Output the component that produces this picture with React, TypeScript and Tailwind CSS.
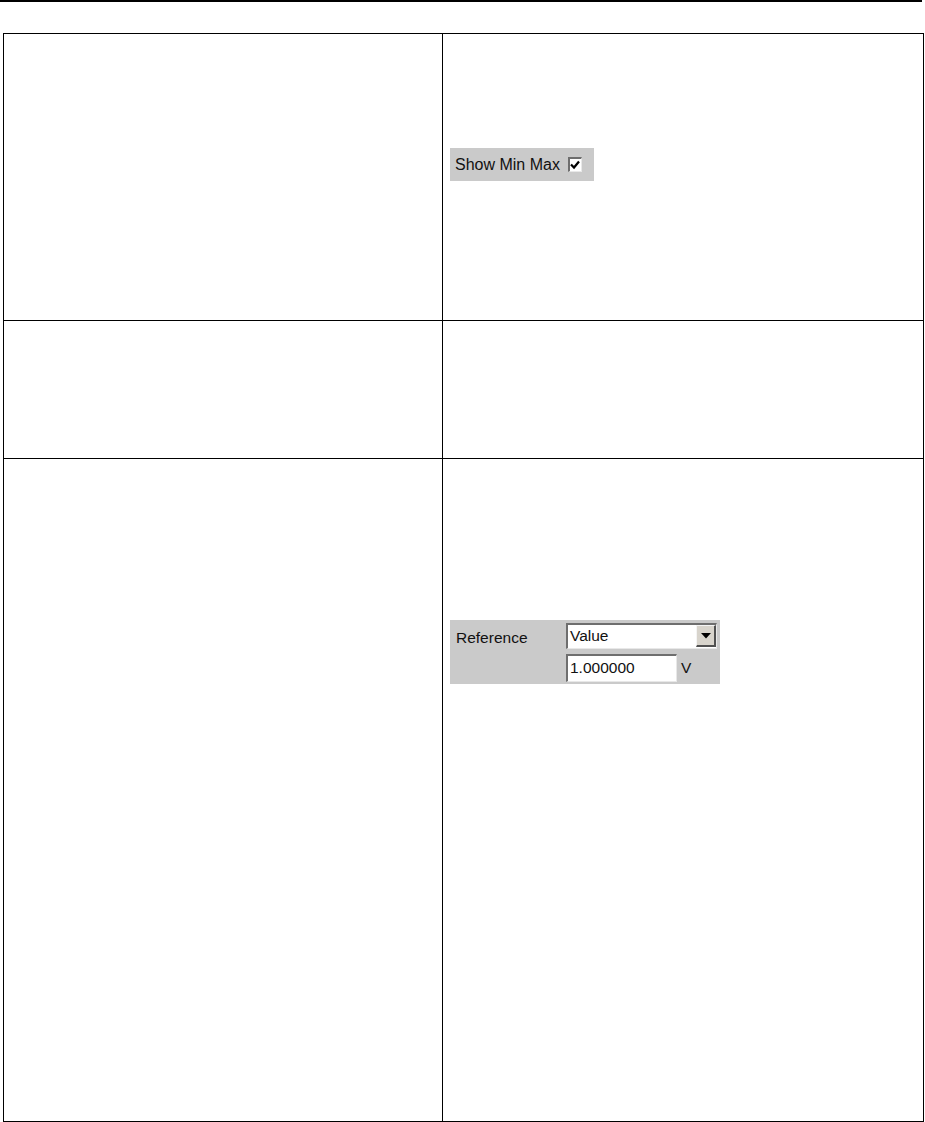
import React from 'react';

const font = "font-['Liberation_Sans',Arial,sans-serif]";

const ShowMinMax: React.FC = () => (
  <div className={`flex h-[33px] w-[144px] items-center bg-[#cacaca] pl-[5px] text-[16px] text-[#111] ${font}`}>
    <span>Show Min Max</span>
    <span className="ml-[8px] flex h-[15px] w-[14px] items-center justify-center border-t-2 border-l-2 border-r border-b border-t-[#6e6e6e] border-l-[#6e6e6e] border-r-[#e8e8e8] border-b-[#e8e8e8] bg-white">
      <svg width="10" height="10" viewBox="0 0 10 10">
        <path d="M1 4.5 L4 7.5 L9 1.5" fill="none" stroke="#000" strokeWidth="2.2" />
      </svg>
    </span>
  </div>
);

const ReferencePanel: React.FC = () => (
  <div className={`flex h-[64px] w-[270px] bg-[#cacaca] text-[15.5px] text-[#111] ${font}`}>
    <div className="w-[116px] pl-[6px] pt-[6px]">Reference</div>
    <div className="flex flex-col pt-[3px]">
      <div className="flex h-[26px] w-[151px] border-t-2 border-l-2 border-r border-b border-t-[#6e6e6e] border-l-[#6e6e6e] border-r-[#e8e8e8] border-b-[#e8e8e8] bg-white">
        <span className="flex-1 pl-[2px] leading-[22px]">Value</span>
        <span className="flex h-[22px] w-[20px] items-center justify-center border-t border-l border-r-2 border-b-2 border-t-[#f4f4f4] border-l-[#f4f4f4] border-r-[#505050] border-b-[#505050] bg-[#d8d4cc]">
          <svg width="10" height="6" viewBox="0 0 10 6">
            <path d="M0 0 H10 L5 5.5 Z" fill="#000" />
          </svg>
        </span>
      </div>
      <div className="mt-[5px] flex items-center">
        <div className="h-[28px] w-[111px] border-t-2 border-l-2 border-r border-b border-t-[#6e6e6e] border-l-[#6e6e6e] border-r-[#e8e8e8] border-b-[#e8e8e8] bg-white pl-[2px] leading-[24px]">
          1.000000
        </div>
        <span className="ml-[4px]">V</span>
      </div>
    </div>
  </div>
);

export default function App() {
  return (
    <div className="h-[1122px] w-[925px] overflow-hidden bg-white">
      <div className="h-[2px] w-[922px] bg-black" />
      <div className="ml-[3px] mt-[31px] w-[921px] border border-black">
        <div className="grid h-[286px] grid-cols-[438px_1fr]">
          <div />
          <div className="border-l border-black pl-[7px] pt-[114px]">
            <ShowMinMax />
          </div>
        </div>
        <div className="grid h-[138px] grid-cols-[438px_1fr] border-t border-black">
          <div />
          <div className="border-l border-black" />
        </div>
        <div className="grid h-[663px] grid-cols-[438px_1fr] border-t border-black">
          <div />
          <div className="border-l border-black pl-[7px] pt-[161px]">
            <ReferencePanel />
          </div>
        </div>
      </div>
    </div>
  );
}
